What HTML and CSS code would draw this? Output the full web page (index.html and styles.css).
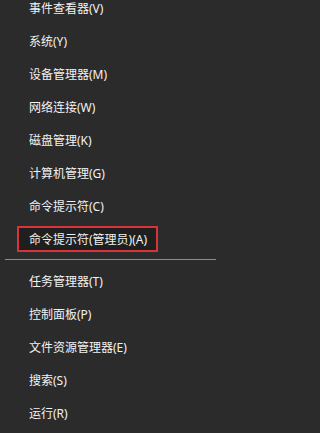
FILE: index.html
```html
<!DOCTYPE html>
<html lang="zh-CN">
<head>
<meta charset="utf-8">
<link rel="stylesheet" href="styles.css">
</head>
<body>
<div class="menu">
  <div class="group first">
    <div class="item">事件查看器(V)</div>
    <div class="item">系统(Y)</div>
    <div class="item">设备管理器(M)</div>
    <div class="item">网络连接(W)</div>
    <div class="item">磁盘管理(K)</div>
    <div class="item">计算机管理(G)</div>
    <div class="item">命令提示符(C)</div>
    <div class="item"><span class="marked">命令提示符(管理员)(A)</span></div>
  </div>
  <div class="sep"></div>
  <div class="group">
    <div class="item">任务管理器(T)</div>
    <div class="item">控制面板(P)</div>
    <div class="item">文件资源管理器(E)</div>
    <div class="item">搜索(S)</div>
    <div class="item">运行(R)</div>
  </div>
</div>
</body>
</html>
```

FILE: styles.css
```css
html, body {
  margin: 0;
  padding: 0;
  background: #2b2b2b;
  height: 100%;
  overflow: hidden;
}
.menu {
  width: 227px;
  display: flex;
  flex-direction: column;
  font-family: "Noto Sans", "Noto Sans CJK SC", sans-serif;
  font-size: 12px;
  color: #f2f2f2;
}
.group {
  display: flex;
  flex-direction: column;
}
.group.first {
  margin-top: -9px;
}
.item {
  height: 33px;
  display: flex;
  align-items: center;
  padding-left: 29px;
  white-space: nowrap;
}
.marked {
  display: flex;
  align-items: center;
  height: 22px;
  margin-left: -12px;
  padding: 0 9px 0 10px;
  border: 2px solid #d8333b;
  background: #1f1f1f;
}
.sep {
  height: 1px;
  background: #8c8c8c;
  margin: 4px 11px 4px 5px;
}
```
